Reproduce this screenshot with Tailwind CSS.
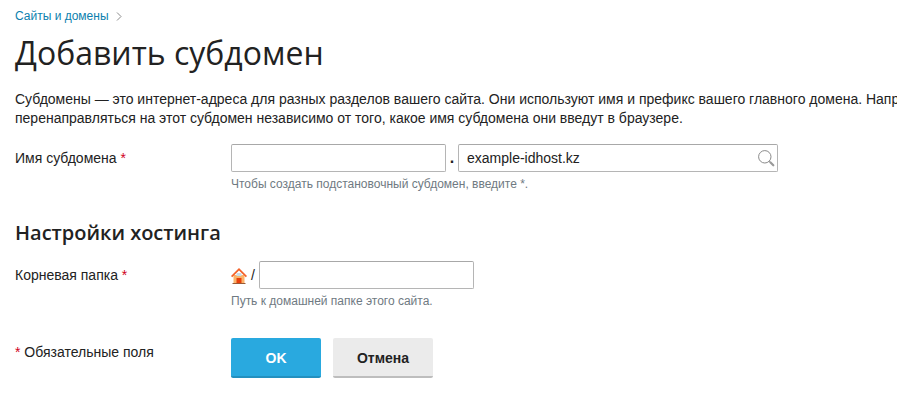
<!DOCTYPE html>
<html lang="ru">
<head>
<meta charset="utf-8">
<script src="https://cdn.jsdelivr.net/npm/@tailwindcss/browser@4"></script>
</head>
<body class="bg-white overflow-hidden">
<div class="w-[897px] h-[412px] overflow-hidden pl-[15px] font-['Liberation_Sans',Arial,sans-serif] text-[14px] leading-[20px] text-[#222222]">
  <nav class="flex items-center h-[16px] mt-[8px] text-[12px] leading-[16px] text-[#0c7fae]">
    <span>Сайты и домены</span>
    <svg class="ml-[7px]" width="6" height="9" viewBox="0 0 6 9" fill="none" stroke="#8a8a8a" stroke-width="1"><path d="M1 .5l4 4-4 4"/></svg>
  </nav>
  <h1 class="mt-[4px] h-[50px] font-['Open_Sans',sans-serif] text-[32px] leading-[50px] font-normal text-[#222222]">Добавить субдомен</h1>
  <div class="mt-[12px] w-[882px] overflow-hidden whitespace-nowrap leading-[19px]">
    <p>Субдомены — это интернет-адреса для разных разделов вашего сайта. Они используют имя и префикс вашего главного домена. Например,</p>
    <p>перенаправляться на этот субдомен независимо от того, какое имя субдомена они введут в браузере.</p>
  </div>
  <div class="mt-[16px] flex">
    <label class="w-[216px] pt-[4px]">Имя субдомена <span class="text-[#d0021b]">*</span></label>
    <div>
      <div class="flex items-center h-[28px]">
        <div class="w-[215px] h-[28px] border border-[#b5b5b5] border-t-[#a8a8a8] rounded-[2px] bg-white"></div>
        <span class="w-[12px] text-center font-bold text-[16px]">.</span>
        <div class="relative w-[320px] h-[28px] border border-[#b5b5b5] border-t-[#a8a8a8] rounded-[2px] bg-white pl-[8px] leading-[26px] text-[#222222]">example-idhost.kz
          <svg class="absolute right-[2px] top-[5px]" width="17" height="17" viewBox="0 0 17 17" fill="none"><circle cx="6.8" cy="6.8" r="6.2" stroke="#8a8a8a" stroke-width="1"/><path d="M11.3 11.3l1 1" stroke="#8a8a8a"/><path d="M12.3 12.3l3 3" stroke="#9a9a9a" stroke-width="2.2" stroke-linecap="round"/></svg>
        </div>
      </div>
      <p class="mt-[4px] text-[12px] leading-[16px] text-[#6f7a82]">Чтобы создать подстановочный субдомен, введите *.</p>
    </div>
  </div>
  <h2 class="mt-[26px] h-[30px] font-['Open_Sans',sans-serif] text-[20px] leading-[30px] font-semibold text-[#222222]">Настройки хостинга</h2>
  <div class="mt-[13px] flex">
    <label class="w-[216px] pt-[4px]">Корневая папка <span class="text-[#d0021b]">*</span></label>
    <div>
      <div class="flex items-center h-[28px]">
        <svg class="mt-[2px]" width="16" height="16" viewBox="0 0 16 16"><path d="M2.5 7h11v8h-11z" fill="#fbb36a"/><path d="M0 8l8-8 8 8-1.2 1.2L8 2.6 1.2 9.2z" fill="#f4622a"/><path d="M5.5 5h5v3h-5z" fill="#c9dde8"/><path d="M5.5 10h5v5h-5z" fill="#e8400c"/><path d="M1.5 15h13v1h-13z" fill="#9a5a35"/></svg>
        <span class="ml-[4px] w-[8px] text-[#222222]">/</span>
        <div class="w-[215px] h-[28px] border border-[#b5b5b5] border-t-[#a8a8a8] rounded-[2px] bg-white"></div>
      </div>
      <p class="mt-[4px] text-[12px] leading-[16px] text-[#6f7a82]">Путь к домашней папке этого сайта.</p>
    </div>
  </div>
  <div class="mt-[29px] flex">
    <div class="w-[216px] pt-[4px]"><span class="text-[#d0021b]">*</span> Обязательные поля</div>
    <div class="flex gap-[12px]">
      <button class="w-[90px] h-[40px] pt-[2px] rounded-[2px] bg-[#29a9df] border-b-2 border-[#2390bf] text-white font-bold text-[14px]">OK</button>
      <button class="w-[100px] h-[40px] pt-[2px] rounded-[2px] bg-[#ebebeb] border-b-2 border-[#bdbdbd] text-[#222222] font-bold text-[14px]">Отмена</button>
    </div>
  </div>
</div>
</body>
</html>
